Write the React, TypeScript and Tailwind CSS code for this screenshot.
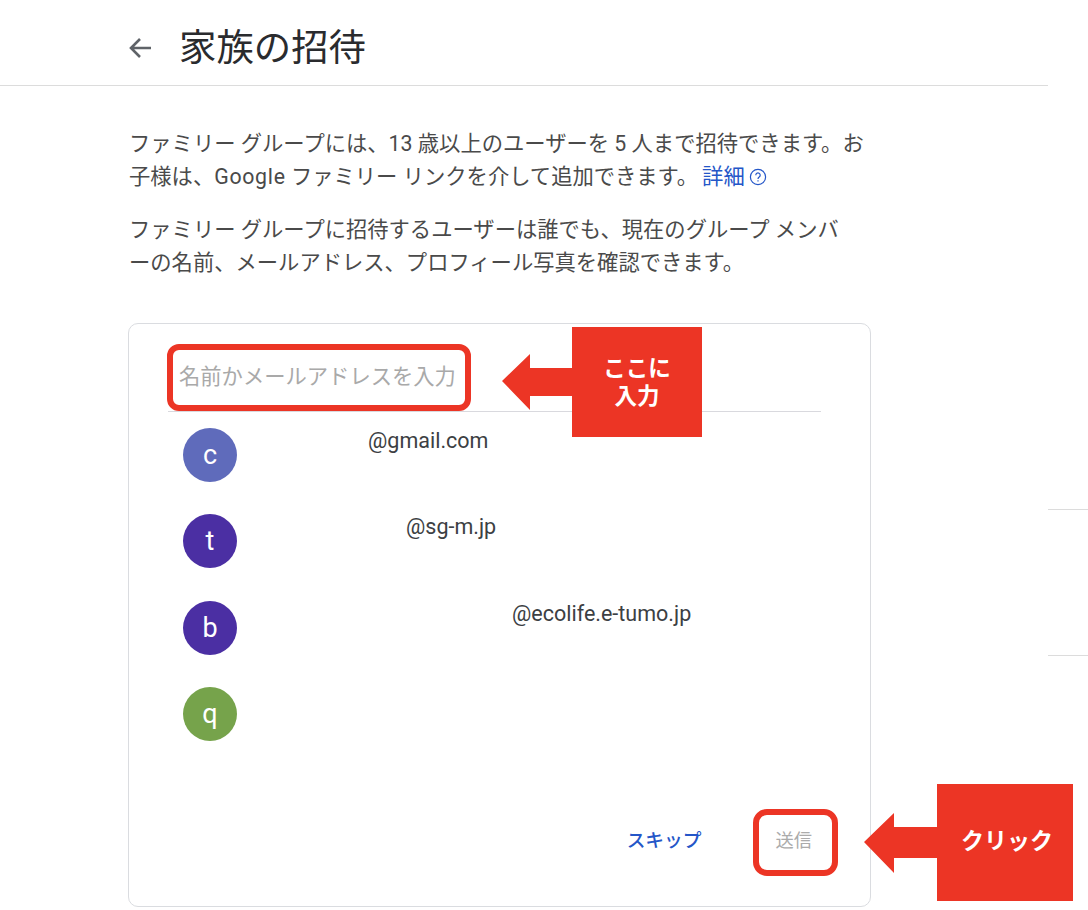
import React from 'react';

const FONT = "font-['Roboto','Noto_Sans_CJK_JP',sans-serif]";

const contacts = [
  { letter: 'c', color: 'bg-[#5f6bbb]', email: '@gmail.com', offset: 'ml-[131px]' },
  { letter: 't', color: 'bg-[#4b2fa3]', email: '@sg-m.jp', offset: 'ml-[169px]' },
  { letter: 'b', color: 'bg-[#4b2fa3]', email: '@ecolife.e-tumo.jp', offset: 'ml-[275px]' },
  { letter: 'q', color: 'bg-[#76a34b]', email: '', offset: '' },
];

const App: React.FC = () => {
  return (
    <div className={`relative w-[1088px] h-[910px] overflow-hidden bg-white text-[#3c4043] ${FONT}`}>
      <header className="w-[1048px] h-[86px] border-b border-[#dcdcdc] flex items-center pl-[128px]">
        <svg width="24" height="24" viewBox="0 0 24 24" fill="none" stroke="#5f6368" strokeWidth="2.6" className="mt-[10px]">
          <path d="M23 12H3M12 3l-9 9 9 9" />
        </svg>
        <h1 className="ml-[27px] text-[37.4px] leading-none font-normal text-[#2a2b2e] mt-[12px]">家族の招待</h1>
      </header>

      <div className="pl-[129px] pt-[41px] text-[21.3px] leading-[33px] text-[#4a4a4a]">
        <p className="whitespace-nowrap">
          ファミリー グループには、13 歳以上のユーザーを 5 人まで招待できます。お<br />
          子様は、<span className="tracking-[0.7px]">Google</span> ファミリー リンクを介して追加できます。
          <span className="ml-[4px] text-[#2456c8]">詳細</span>
          <svg width="18" height="18" viewBox="0 0 18 18" fill="none" className="inline-block ml-[4px] mb-[2px]" stroke="#2456c8" strokeWidth="1.2">
            <circle cx="9" cy="9" r="7.6" />
            <path d="M6.8 7.2a2.2 2.2 0 1 1 3.4 1.8c-.8.5-1.2 1-1.2 1.9" />
            <path d="M9 12.2v1.2" />
          </svg>
        </p>
        <p className="mt-[20px] whitespace-nowrap">
          ファミリー グループに招待するユーザーは誰でも、現在のグループ メンバ<br />
          ーの名前、メールアドレス、プロフィール写真を確認できます。
        </p>
      </div>

      <section className="ml-[128px] mt-[44px] w-[743px] h-[584px] border border-[#dadce0] rounded-[10px] flex flex-col">
        <div className="ml-[39px] mr-[49px] h-[88px] border-b border-[#d9d9de] flex items-end pb-[20px]">
          <span className="ml-[11px] text-[21.3px] leading-[28px] text-[#a9a9a9]">名前かメールアドレスを入力</span>
        </div>
        <ul className="ml-[54px] mt-[16px] flex flex-col gap-[32.4px]">
          {contacts.map(c => (
            <li key={c.letter} className="flex items-start h-[54px]">
              <div className={`w-[54px] h-[54px] rounded-full ${c.color} text-white text-[27px] flex items-center justify-center shrink-0`}>
                {c.letter}
              </div>
              {c.email && <span className={`${c.offset} -mt-[1px] text-[21.5px] leading-[28px] text-[#3c4043]`}>{c.email}</span>}
            </li>
          ))}
        </ul>
        <div className="mt-auto flex items-center justify-end pb-[51px] pr-[58px] leading-[28px]">
          <button className="text-[18.7px] text-[#2456c8] font-medium">スキップ</button>
          <button className="ml-[74px] text-[18.3px] text-[#ababab]">送信</button>
        </div>
      </section>

      {/* 右端の区切り線 */}
      <div className="absolute left-[1048px] top-[509px] w-[40px] h-px bg-[#dcdcdc]" />
      <div className="absolute left-[1048px] top-[655px] w-[40px] h-px bg-[#dcdcdc]" />

      {/* 注釈 */}
      <div className="absolute left-[167px] top-[344px] w-[304px] h-[67px] border-[6px] border-[#ec3525] rounded-[12px]" />
      <svg className="absolute left-[502px] top-[354px]" width="70" height="56" viewBox="0 0 70 56">
        <path d="M0 27L28 0V14H70V42H28V56Z" fill="#ec3525" />
      </svg>
      <div className="absolute left-[572px] top-[327px] w-[130px] h-[110px] bg-[#ec3525] text-white text-[22.5px] leading-[28px] font-bold flex items-center justify-center text-center">
        <span>ここに<br />入力</span>
      </div>

      <div className="absolute left-[753px] top-[809px] w-[85px] h-[67px] border-[6px] border-[#ec3525] rounded-[14px]" />
      <svg className="absolute left-[864px] top-[813px]" width="73" height="60" viewBox="0 0 73 60">
        <path d="M0 29L30 0V14H73V45H30V60Z" fill="#ec3525" />
      </svg>
      <div className="absolute left-[937px] top-[784px] w-[136px] h-[117px] bg-[#ec3525] text-white text-[23px] font-bold flex items-center justify-end pr-[20px]">
        クリック
      </div>
    </div>
  );
};

export default App;
